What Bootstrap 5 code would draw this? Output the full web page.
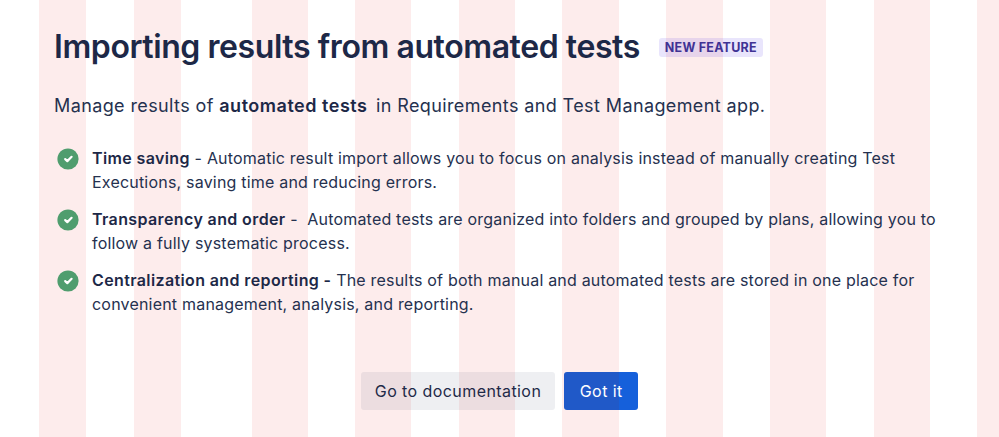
<!DOCTYPE html>
<html lang="en">
<head>
<meta charset="utf-8">
<title>Importing results</title>
<link href="https://cdn.jsdelivr.net/npm/bootstrap@5.3.0/dist/css/bootstrap.min.css" rel="stylesheet">
<style>
html,body{height:100%;margin:0}
body{font-family:Inter,"Noto Sans",sans-serif;color:#25314f;background-color:#fff;
background-image:linear-gradient(90deg,
#fff 0 39px,#fdecec 39px 86px,#fff 86px 134px,#fdecec 134px 181px,#fff 181px 252px,#fdecec 252px 308px,#fff 308px 355px,#fdecec 355px 411px,#fff 411px 459px,#fdecec 459px 515px,#fff 515px 562px,#fdecec 562px 619px,#fff 619px 666px,#fdecec 666px 723px,#fff 723px 770px,#fdecec 770px 826px,#fff 826px 874px,#fdecec 874px 930px,#fff 930px 977px,#fdecec 977px 999px);}
.sheet{width:999px;height:437px;padding:25px 54px 0;overflow:hidden}
.headline{font-size:32px;font-weight:600;line-height:44px;letter-spacing:-.42px;margin:0;color:#1d2847}
.tag{background:rgba(110,80,235,.15);color:#403294;font-size:12.5px;font-weight:700;letter-spacing:.22px;border-radius:3px;padding:0 6px;line-height:19px;margin-left:19px}
.intro{font-size:18px;line-height:26px;margin:24px 0 0;letter-spacing:.39px}
.intro b{margin-right:3px;letter-spacing:.52px;color:#1d2847}
.perks{margin:27px 0 0;padding:0;list-style:none;font-size:16px;line-height:24px;letter-spacing:.2px}
.perks li{display:flex;gap:13px;margin-bottom:13px;padding-left:3px}
.perks svg{flex:none;margin-top:2px}
.perks b{font-weight:600;letter-spacing:.38px;color:#1d2847}
.actions{margin-top:56px;gap:9px}
.act{font-size:16px;line-height:24px;padding:7px 14px;border:0;border-radius:3px;font-weight:400;letter-spacing:.42px}
.act-soft{background:rgba(9,30,66,.07);color:#1f2a48}
.act-main{background:linear-gradient(90deg,#2059c8 0 55px,#1560db 55px);color:#fff;padding-left:15.5px;padding-right:15.5px}
</style>
</head>
<body>
<main class="sheet">
<div class="d-flex align-items-center">
<h1 class="headline">Importing results from automated tests</h1>
<span class="tag text-uppercase">New feature</span>
</div>
<p class="intro">Manage results of <b class="fw-semibold">automated tests</b> in Requirements and Test Management app.</p>
<ul class="perks">
<li><svg width="22" height="22" viewBox="0 0 22 22"><circle cx="11" cy="11" r="10.6" fill="#4f9d6e"/><path d="M8.2 11.1l2.1 2 4.3-4.3" fill="none" stroke="#fff" stroke-width="2.2" stroke-linecap="round" stroke-linejoin="round"/></svg><div><b>Time saving</b> - Automatic result import allows you to focus on analysis instead of manually creating Test Executions, saving time and reducing errors.</div></li>
<li><svg width="22" height="22" viewBox="0 0 22 22"><circle cx="11" cy="11" r="10.6" fill="#4f9d6e"/><path d="M8.2 11.1l2.1 2 4.3-4.3" fill="none" stroke="#fff" stroke-width="2.2" stroke-linecap="round" stroke-linejoin="round"/></svg><div><b>Transparency and order</b> -&nbsp; Automated tests are organized into folders and grouped by plans, allowing you to follow a fully systematic process.</div></li>
<li><svg width="22" height="22" viewBox="0 0 22 22"><circle cx="11" cy="11" r="10.6" fill="#4f9d6e"/><path d="M8.2 11.1l2.1 2 4.3-4.3" fill="none" stroke="#fff" stroke-width="2.2" stroke-linecap="round" stroke-linejoin="round"/></svg><div><b>Centralization and reporting -</b> The results of both manual and automated tests are stored in one place for convenient management, analysis, and reporting.</div></li>
</ul>
<div class="actions d-flex justify-content-center">
<button type="button" class="btn act act-soft">Go to documentation</button>
<button type="button" class="btn act act-main">Got it</button>
</div>
</main>
</body>
</html>
